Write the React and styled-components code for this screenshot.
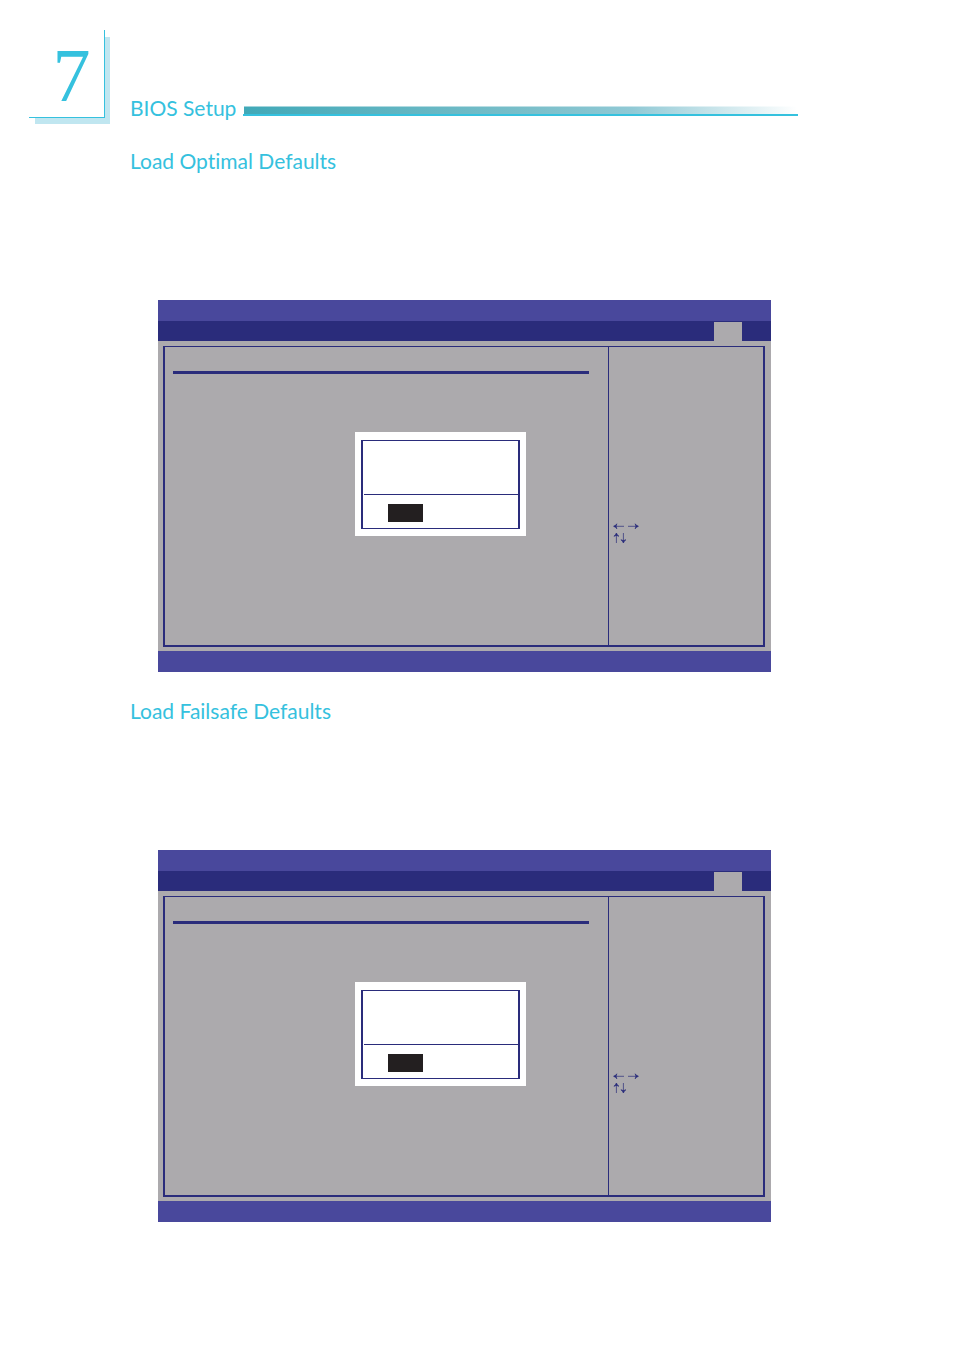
import styled, { createGlobalStyle } from 'styled-components';

const GlobalStyle = createGlobalStyle`
  * {
    box-sizing: border-box;
  }

  body {
    margin: 0;
    background: #ffffff;
    color: #35c1de;
    font-family: Lato, 'Open Sans', sans-serif;
    font-variant-ligatures: none;
  }
`;

const Page = styled.main`
  padding: 30px 156px 128px 29px;
`;

const PageHeader = styled.header`
  display: flex;
  align-items: flex-end;
`;

const Chapter = styled.div`
  position: relative;
  flex: none;
  width: 81px;
  margin-right: 20px;
  padding: 0 5px 6px 0;

  &::before {
    content: '';
    position: absolute;
    inset: 7px 0 0 6px;
    background: #c0e6f0;
  }
`;

const ChapterNumber = styled.div`
  position: relative;
  height: 88px;
  padding-left: 10px;
  border-right: 1px solid #35c1de;
  border-bottom: 1px solid #35c1de;
  background: #ffffff;
  font-family: 'Liberation Serif', serif;
  font-size: 76px;
  line-height: 90px;
  text-align: center;
`;

const PageTitle = styled.h1`
  flex: none;
  margin: 0 7px 4px 0;
  font-size: 21px;
  font-weight: 400;
  line-height: 24px;
`;

const TitleBar = styled.div`
  flex: 1;
  margin-bottom: 8px;
  border-bottom: 2px solid #35c1de;
`;

const TitleBarFill = styled.div`
  height: 8px;
  margin: 0 1px;
  border-top: 1px solid rgba(255, 255, 255, 0.5);
  background: linear-gradient(to right, #41a9b8, #7bbfca 52%, #90c9d5 70%, #ffffff) border-box;
`;

const Sections = styled.div`
  display: flex;
  flex-direction: column;
  gap: 27px;
  margin: 25px 0 0 101px;
`;

const SectionTitle = styled.h2`
  margin: 0 0 127px;
  font-size: 21px;
  font-weight: 400;
  line-height: 24px;
`;

const Screen = styled.div`
  position: relative;
  margin: 0 27px 0 28px;
  background: #acaaad;
`;

const ScreenBar = styled.div`
  height: 21px;
  background: #49489c;
`;

const MenuBar = styled.div`
  display: flex;
  align-items: flex-end;
  justify-content: flex-end;
  height: 20px;
  padding-right: 29px;
  background: #2a2c7b;
`;

const MenuTab = styled.button`
  width: 28px;
  height: 19px;
  padding: 0;
  border: 0;
  background: #acaaad;
`;

const ScreenBody = styled.div`
  padding: 5px 6px 4px 5px;
`;

const Frame = styled.div`
  display: flex;
  height: 301px;
  border: 2px solid #2a2c7b;
  border-top-width: 1px;
`;

const OptionsPane = styled.div`
  flex: 1;
  padding: 24px 19px 0 8px;
`;

const Rule = styled.hr`
  height: 3px;
  margin: 0;
  border: 0;
  background: #2a2c7b;
`;

const HelpPane = styled.div`
  flex: none;
  width: 155px;
  padding: 174px 0 0 4px;
  border-left: 1px solid #2a2c7b;
`;

const KeyArrows = styled.svg`
  display: block;
  width: 26px;
  height: 24px;
`;

const Dialog = styled.div`
  position: absolute;
  top: 132px;
  left: 197px;
  width: 171px;
  padding: 8px 6px 7px;
  background: #ffffff;
`;

const DialogFrame = styled.div`
  border: solid #2a2c7b;
  border-width: 1px 2px;
`;

const DialogMessage = styled.div`
  height: 54px;
  margin-left: 1px;
  border-bottom: 1px solid #2a2c7b;
`;

const DialogActions = styled.div`
  display: flex;
  padding: 9px 25px 6px;
`;

const DialogButton = styled.button`
  width: 35px;
  height: 18px;
  padding: 0;
  border: 0;
  background: #231f20;
`;

const sections = ['Load Optimal Defaults', 'Load Failsafe Defaults'];

function BiosScreen({ name }) {
    return (
        <Screen>
            <ScreenBar />
            <MenuBar>
                <MenuTab type="button" aria-label="Exit" />
            </MenuBar>
            <ScreenBody>
                <Frame>
                    <OptionsPane>
                        <Rule />
                    </OptionsPane>
                    <HelpPane>
                        <KeyArrows viewBox="0 0 26 24" fill="#2a2c7b" stroke="#2a2c7b" strokeWidth="0.7" aria-hidden="true">
                            {/* left and right */}
                            <path d="M1 5.3H11M3.8 2.8Q3 4.6 0.6 5.3Q3 6 3.8 7.8L3 5.3Z" />
                            <path d="M15 5.3H25M22.2 2.8Q23 4.6 25.4 5.3Q23 6 22.2 7.8L23 5.3Z" />
                            {/* up and down */}
                            <path d="M3.4 22V12.5M0.9 15.2Q2.7 14.4 3.4 12Q4.1 14.4 5.9 15.2L3.4 14.4Z" />
                            <path d="M10.4 12V21.5M7.9 18.8Q9.7 19.6 10.4 22Q11.1 19.6 12.9 18.8L10.4 19.6Z" />
                        </KeyArrows>
                    </HelpPane>
                </Frame>
            </ScreenBody>
            <ScreenBar />
            <Dialog role="dialog" aria-label={name}>
                <DialogFrame>
                    <DialogMessage />
                    <DialogActions>
                        <DialogButton type="button" aria-label="Ok" />
                    </DialogActions>
                </DialogFrame>
            </Dialog>
        </Screen>
    );
}

export default function App() {
    return (
        <>
            <GlobalStyle />
            <Page>
                <PageHeader>
                    <Chapter>
                        <ChapterNumber>7</ChapterNumber>
                    </Chapter>
                    <PageTitle>BIOS Setup</PageTitle>
                    <TitleBar>
                        <TitleBarFill />
                    </TitleBar>
                </PageHeader>
                <Sections>
                    {sections.map((name) => (
                        <section key={name}>
                            <SectionTitle>{name}</SectionTitle>
                            <BiosScreen name={name} />
                        </section>
                    ))}
                </Sections>
            </Page>
        </>
    );
}
